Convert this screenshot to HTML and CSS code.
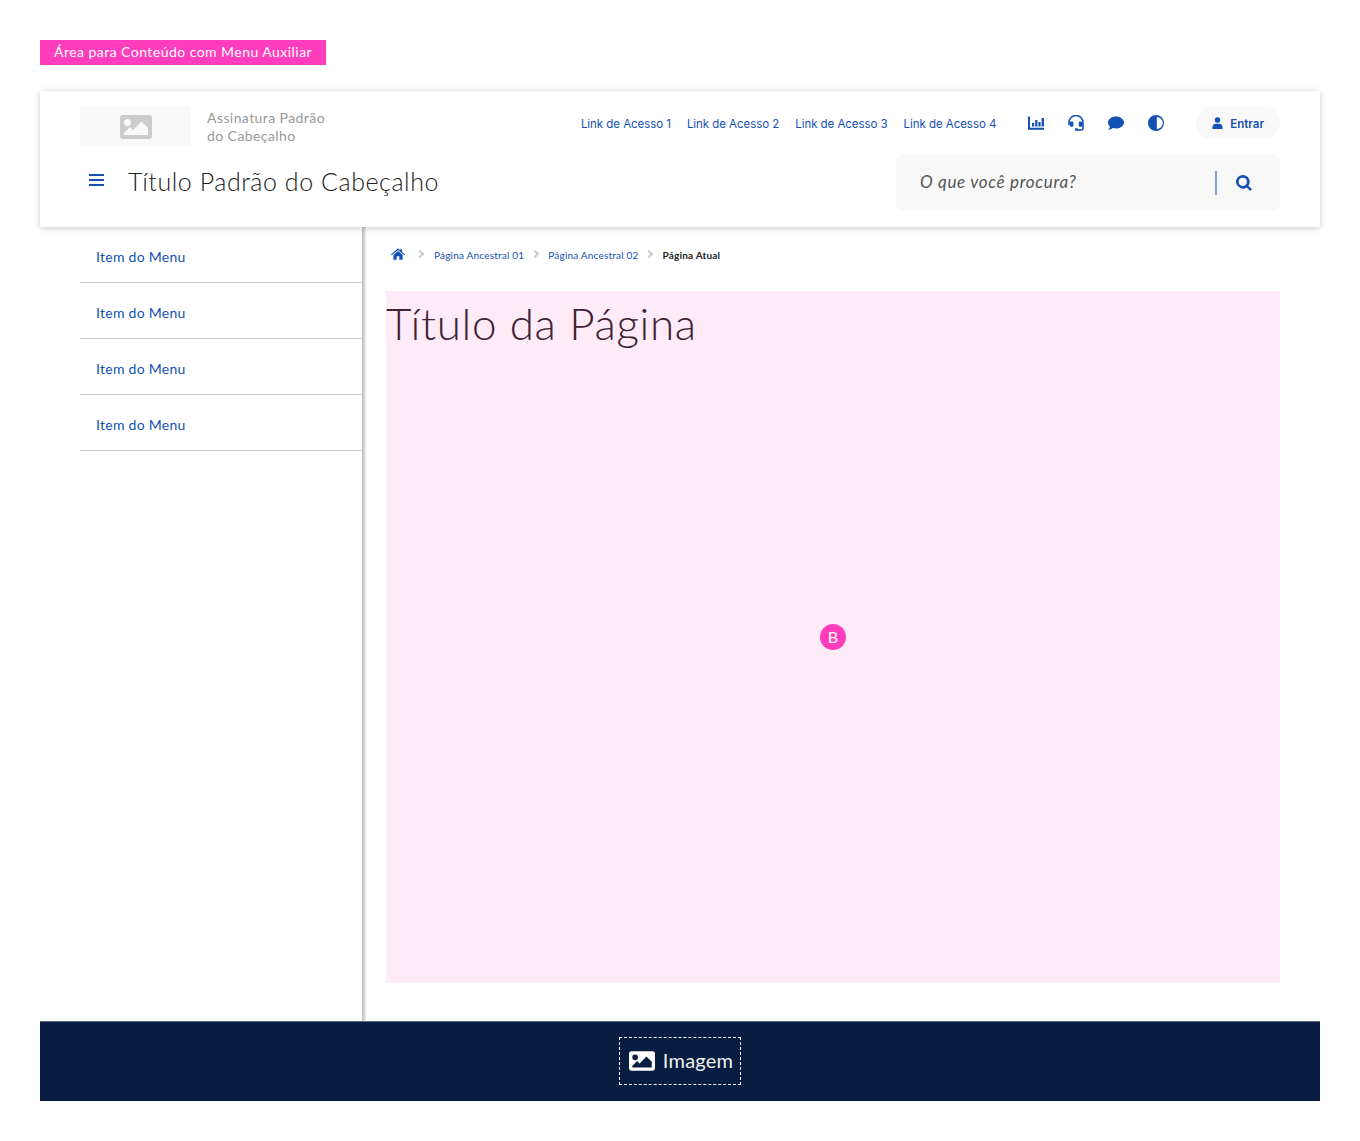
FILE: index.html
```html
<!DOCTYPE html>
<html lang="pt-BR">
<head>
  <meta charset="UTF-8">
  <title>Área para Conteúdo com Menu Auxiliar</title>
  <link rel="stylesheet" href="styles.css">
</head>
<body>

  <div class="tag">Área para Conteúdo com Menu Auxiliar</div>

  <div class="frame">
    <header class="header">
      <div class="header-top">
        <div class="logo">
          <svg class="logo-icon" viewBox="0 0 32 24"><path fill-rule="evenodd" d="M3 0h26a3 3 0 0 1 3 3v18a3 3 0 0 1-3 3H3a3 3 0 0 1-3-3V3a3 3 0 0 1 3-3zM7.500 4a3.500 3.500 0 1 0 0 7 3.500 3.500 0 0 0 0-7zM4 20h24v-7l-6.500-6.500L13 15l-3-3-6 6z"/></svg>
        </div>
        <div class="signature">Assinatura Padrão<br>do Cabeçalho</div>
        <div class="header-actions">
          <nav class="access-links">
            <a>Link de Acesso 1</a>
            <a>Link de Acesso 2</a>
            <a>Link de Acesso 3</a>
            <a>Link de Acesso 4</a>
          </nav>
          <div class="tools">
            <svg class="tool" viewBox="0 0 16 16"><path d="M0 1.500h2v11.200h14v2H0z"/><path d="M4 8h2.200v3.500H4zM7.200 5h2.200v6.500H7.200zM10.400 7h2.200v4.500h-2.200zM13.600 3H16v8.500h-2.400z"/></svg>
            <svg class="tool" viewBox="0 0 16 16"><path class="tool-line" d="M1 10V7.500a7 7 0 0 1 14 0V13a2 2 0 0 1-2 2H9"/><rect x="1.800" y="6.500" width="3.600" height="5.200" rx="1.200"/><rect x="10.800" y="6.500" width="3.600" height="5.200" rx="1.200"/><rect x="6.800" y="13.200" width="3.400" height="2.600" rx="1"/></svg>
            <svg class="tool" viewBox="0 0 16 16"><path d="M8 1.500c4.400 0 8 2.700 8 6s-3.600 6-8 6c-1.100 0-2.200-.2-3.100-.5C3.900 13.800 2.300 14.800 0.300 14.800c.9-.9 1.500-2 1.700-3.200C0.800 10.500 0 9.100 0 7.500c0-3.300 3.600-6 8-6z"/></svg>
            <svg class="tool" viewBox="0 0 16 16"><path fill-rule="evenodd" d="M8 0a8 8 0 1 1 0 16A8 8 0 0 1 8 0zm.800 2v12a6 6 0 0 0 0-12z"/></svg>
          </div>
          <button class="login">
            <svg class="login-icon" viewBox="0 0 12 13"><circle cx="6" cy="3.200" r="3"/><path d="M0.500 13v-1.800C0.500 8.900 2.100 7.200 4 7.200h4c1.900 0 3.500 1.700 3.500 4V13z"/></svg>
            <span class="login-text">Entrar</span>
          </button>
        </div>
      </div>
      <div class="header-bottom">
        <svg class="burger" viewBox="0 0 15 13"><path d="M0 0h15v2H0zM0 5h15v2H0zM0 10h15v2H0z"/></svg>
        <div class="header-title">Título Padrão do Cabeçalho</div>
        <div class="search">
          <span class="search-text">O que você procura?</span>
          <span class="search-sep"></span>
          <svg class="search-icon" viewBox="0 0 16 16"><path fill-rule="evenodd" d="M6.800 0a6.800 6.800 0 0 1 5.500 10.800l3.700 3.400-1.800 1.800-3.500-3.600A6.800 6.800 0 1 1 6.800 0zm0 2.700a4.100 4.100 0 1 0 0 8.200 4.100 4.100 0 0 0 0-8.200z"/></svg>
        </div>
      </div>
    </header>

    <div class="middle">
      <aside class="side">
        <a class="side-item">Item do Menu</a>
        <a class="side-item">Item do Menu</a>
        <a class="side-item">Item do Menu</a>
        <a class="side-item">Item do Menu</a>
      </aside>
      <main class="content">
        <div class="crumbs">
          <svg class="home" viewBox="0 0 16 13"><path d="M8 0l2.500 2.200V1h2v3l3.500 3-.8.900L8 2 .8 7.900 0 7z"/><path d="M8 3.200l5.300 4.400V13H9.500V9h-3v4H2.700V7.600z"/></svg>
          <span class="chev first"></span>
          <a>Página Ancestral 01</a>
          <span class="chev"></span>
          <a>Página Ancestral 02</a>
          <span class="chev"></span>
          <b>Página Atual</b>
        </div>
        <div class="pink">
          <h1>Título da Página</h1>
          <span class="badge">B</span>
        </div>
      </main>
    </div>

    <footer class="footer">
      <div class="footer-box">
        <svg class="footer-icon" viewBox="0 0 32 24"><path fill-rule="evenodd" d="M3 0h26a3 3 0 0 1 3 3v18a3 3 0 0 1-3 3H3a3 3 0 0 1-3-3V3a3 3 0 0 1 3-3zM7.500 4a3.500 3.500 0 1 0 0 7 3.500 3.500 0 0 0 0-7zM4 20h24v-7l-6.500-6.500L13 15l-3-3-6 6z"/></svg>
        <span class="footer-text">Imagem</span>
      </div>
    </footer>
  </div>

</body>
</html>
```

FILE: styles.css
```css
body {
  margin: 0;
  padding: 40px 40px 40px;
  background: #fff;
  font-family: 'Lato', 'Liberation Sans', sans-serif;
  color: #333;
}

a {
  color: #1351b4;
  text-decoration: none;
}

.tag {
  display: inline-block;
  height: 25px;
  line-height: 23px;
  padding: 0 14px;
  background: #ff3dbd;
  color: #fff;
  font-size: 14px;
  letter-spacing: 0.46px;
  vertical-align: top;
}

.frame {
  margin-top: 26px;
}

/* Header */
.header {
  position: relative;
  z-index: 1;
  height: 136px;
  padding: 16px 40px 0;
  box-sizing: border-box;
  background: #fff;
  box-shadow: 0 1px 6px rgba(0, 0, 0, 0.22);
}

.header-top {
  display: flex;
  align-items: center;
  height: 40px;
}

.logo {
  display: flex;
  align-items: center;
  justify-content: center;
  width: 111px;
  height: 40px;
  background: #f8f8f8;
}

.logo-icon {
  width: 32px;
  height: 24px;
  fill: #ccc;
}

.signature {
  margin-left: 16px;
  font-size: 14px;
  line-height: 18px;
  color: #999;
  letter-spacing: 0.42px;
}

.header-actions {
  display: flex;
  align-items: center;
  align-self: flex-start;
  height: 32px;
  margin-left: auto;
}

.access-links {
  display: flex;
  gap: 16px;
  padding-top: 2px;
  font-family: 'Inter', sans-serif;
  font-size: 11.500px;
  letter-spacing: -0.05px;
}

.tools {
  display: flex;
  gap: 24px;
  margin-left: 32px;
}

.tool {
  width: 16px;
  height: 16px;
  fill: #1351b4;
}

.tool-line {
  fill: none;
  stroke: #1351b4;
  stroke-width: 1.600;
}

.login {
  display: flex;
  align-items: center;
  gap: 7px;
  height: 32px;
  margin-left: 32px;
  padding: 0 16px;
  border: none;
  border-radius: 16px;
  background: #f8f8f8;
  color: #1351b4;
  font-family: 'Inter', sans-serif;
  font-size: 11.500px;
  font-weight: 600;
}

.login-text {
  padding-top: 2px;
}

.login-icon {
  width: 11px;
  height: 12px;
  fill: #1351b4;
}

.header-bottom {
  display: flex;
  align-items: center;
  height: 56px;
  margin-top: 8px;
}

.burger {
  width: 15px;
  height: 13px;
  margin: -6px 0 0 9px;
  fill: #1351b4;
}

.header-title {
  margin: -4px 0 0 24px;
  font-size: 25px;
  font-weight: 300;
  letter-spacing: 0.56px;
  color: #222;
}

.search {
  display: flex;
  align-items: center;
  width: 384px;
  height: 56px;
  margin-left: auto;
  padding: 0 28px 0 24px;
  box-sizing: border-box;
  border-radius: 6px;
  background: #f8f8f8;
}

.search-text {
  margin-top: -3px;
  font-size: 17px;
  font-style: italic;
  letter-spacing: 0.68px;
  color: #555;
}

.search-sep {
  width: 2px;
  height: 24px;
  margin-left: auto;
  background: #7ba0da;
}

.search-icon {
  width: 16px;
  height: 16px;
  margin-left: 19px;
  fill: #1351b4;
}

/* Middle */
.middle {
  display: flex;
  height: 794px;
}

.side {
  flex-shrink: 0;
  width: 282px;
  margin-left: 40px;
  padding-right: 4px;
  background: linear-gradient(90deg, #bdbdbd, #d6d6d6 60%, #f4f4f4) right top / 4px 100% no-repeat;
}

.side-item {
  display: block;
  height: 56px;
  line-height: 60px;
  padding-left: 16px;
  box-sizing: border-box;
  border-bottom: 1px solid #ccc;
  font-size: 14px;
  letter-spacing: 0.27px;
}

.content {
  flex: 1;
  padding: 0 40px 0 20px;
}

.crumbs {
  display: flex;
  align-items: center;
  height: 64px;
  padding: 0 0 8px 5px;
  box-sizing: border-box;
  font-size: 10px;
  letter-spacing: 0.2px;
}

.crumbs b {
  color: #222;
}

.home {
  width: 14px;
  height: 12px;
  margin-top: -2px;
  fill: #1351b4;
}

.chev {
  width: 4px;
  height: 4px;
  margin: -3px 10.500px 0 7.500px;
  border-top: 2px solid #ccc;
  border-right: 2px solid #ccc;
  transform: rotate(45deg);
}

.chev.first {
  margin: -3px 11px 0 12px;
}

.pink {
  position: relative;
  height: 692px;
  background: #ffeaf8;
}

.pink h1 {
  margin: 0;
  padding-top: 6px;
  font-size: 44px;
  font-weight: 300;
  line-height: 52px;
  letter-spacing: 0.65px;
  color: #3f2234;
}

.badge {
  position: absolute;
  left: 434px;
  top: 333px;
  width: 26px;
  height: 26px;
  line-height: 26px;
  border-radius: 50%;
  background: #ff3dbd;
  color: #fff;
  font-size: 16px;
  text-align: center;
}

/* Footer */
.footer {
  display: flex;
  align-items: center;
  justify-content: center;
  height: 80px;
  background: #071d41;
  box-shadow: inset 0 1px 0 #5c6b84;
}

.footer-box {
  display: flex;
  align-items: center;
  gap: 8px;
  height: 48px;
  padding: 0 7px 0 9px;
  box-sizing: border-box;
  border: 1px dashed #fff;
  color: #f0f0f0;
  font-size: 20px;
  letter-spacing: 0.2px;
}

.footer-text {
  margin-top: -2px;
}

.footer-icon {
  width: 26px;
  height: 20px;
  fill: #fff;
}
```
